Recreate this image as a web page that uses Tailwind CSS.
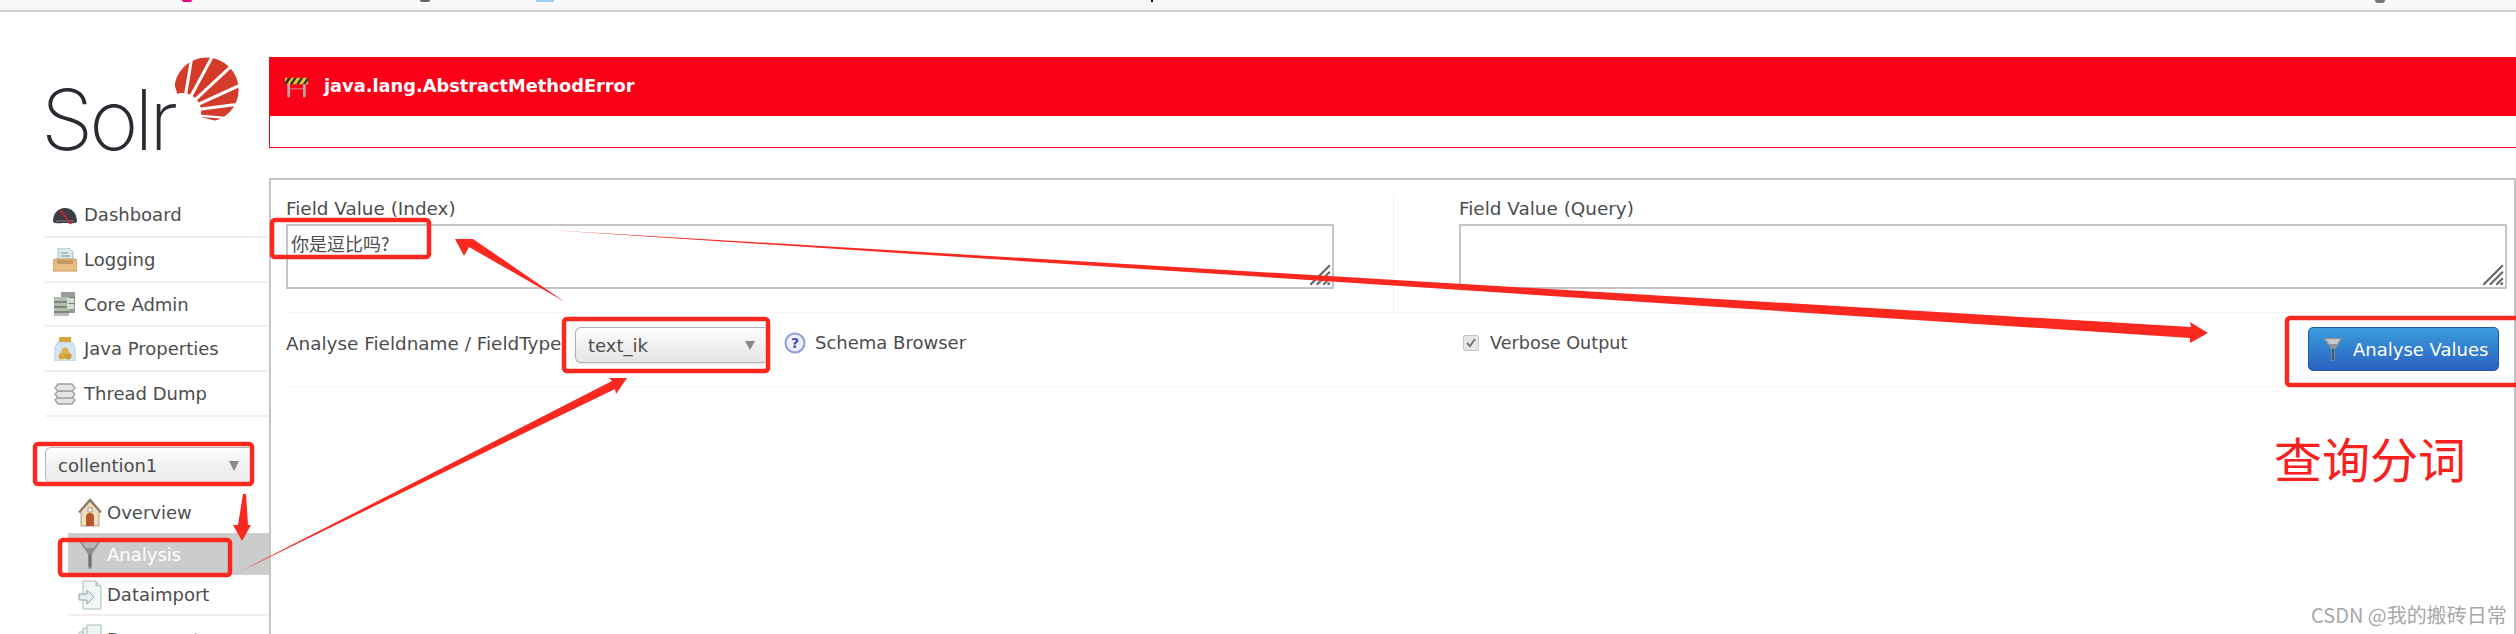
<!DOCTYPE html>
<html lang="en">
<head>
<meta charset="utf-8">
<title>Solr Admin</title>
<script src="https://cdn.jsdelivr.net/npm/@tailwindcss/browser@4"></script>
</head>
<body class="bg-white">
<div class="relative w-[2516px] h-[634px] overflow-hidden bg-white text-[#4d4d4d] text-[18px] font-['DejaVu_Sans',sans-serif]">
  <!-- browser strip -->
  <div class="relative h-[12px] bg-[#f8f8fa] border-b-2 border-[#cfcfd1]">
    <span class="absolute left-[182px] top-0 w-[10px] h-[2px] rounded-b-full bg-[#e6007e]"></span>
    <span class="absolute left-[420px] top-0 w-[10px] h-[2px] rounded-b-full bg-[#666]"></span>
    <span class="absolute left-[536px] top-0 w-[18px] h-[2px] bg-[#9cd0f0]"></span>
    <span class="absolute left-[1151px] top-0 w-[2px] h-[2px] bg-black"></span>
    <span class="absolute left-[2375px] top-0 w-[10px] h-[3px] rounded-b-full bg-[#777]"></span>
  </div>

  <div class="flex">
    <!-- sidebar -->
    <aside class="w-[269px] shrink-0 pl-[45px]">
      <div class="relative h-[181px] pt-[60px]">
        <svg class="absolute left-[128px] top-[45px]" width="67" height="66" viewBox="516 168 200 196">
          <circle cx="616" cy="265" r="96" fill="#d53b2a"/>
          <g stroke="#fff" stroke-width="9">
            <line x1="545" y1="330" x2="572" y2="170"/>
            <line x1="545" y1="330" x2="634" y2="165"/>
            <line x1="545" y1="330" x2="690" y2="195"/>
            <line x1="545" y1="330" x2="720" y2="250"/>
            <line x1="545" y1="330" x2="715" y2="308"/>
          </g>
          <line x1="545" y1="338" x2="680" y2="350" stroke="#fff" stroke-width="7"/>
          <circle cx="545" cy="330" r="55" fill="#fff"/>
          <polygon points="545,330 505,200 480,200 480,420 720,420 700,358 650,360 595,345" fill="#fff"/>
        </svg>
        <div class="relative font-['Inter',sans-serif] font-extralight text-[#2b2a33] text-[84px] leading-[96px] tracking-[-4px] -ml-[4px]">Solr</div>
      </div>

      <nav>
        <a class="flex items-center h-[45px] pl-2 gap-[7px] border-b-2 border-[#f0f0f0]">
          <svg class="w-6 h-6" viewBox="0 0 24 24"><path d="M0 19C0 10 5 5 12 5s12 5 12 14c-3 2-6 1-12 1s-9 1-12-1z" fill="#3d3d45"/><path d="M3 18h18" stroke="#8a8a90" stroke-width="1"/><path d="M7 7l11 14" stroke="#c1272d" stroke-width="2"/></svg>
          <span>Dashboard</span>
        </a>
        <a class="flex items-center h-[45px] pl-2 gap-[7px] border-b-2 border-[#f0f0f0]">
          <svg class="w-6 h-6" viewBox="0 0 24 24"><path d="M5 0h11l4 4v12H5z" fill="#d8eaea" stroke="#a9c0c0"/><path d="M8 5h7M8 8h9" stroke="#9db5b5" stroke-width="1.5"/><path d="M0 12l3-1h18l3 1v11H0z" fill="#e8bd82" stroke="#c99a5c"/><path d="M4 12h16v4H4z" fill="#c59a62"/></svg>
          <span>Logging</span>
        </a>
        <a class="flex items-center h-[44px] pl-2 gap-[7px] border-b-2 border-[#f0f0f0]">
          <svg class="w-6 h-6" viewBox="0 0 24 24"><path d="M8 0h14v21H8z" fill="#9a9a9a"/><path d="M1 5h15v19H1z" fill="#b5bdb2"/><path d="M1 10h15M1 15h15M1 20h15M22 6H16M22 12H16" stroke="#6c706a" stroke-width="1.5"/><path d="M14 6h7v5h-7zM14 12h7v5h-7z" fill="#cde0d0"/></svg>
          <span>Core Admin</span>
        </a>
        <a class="flex items-center h-[45px] pl-2 gap-[7px] border-b-2 border-[#f0f0f0]">
          <svg class="w-6 h-6" viewBox="0 0 24 24"><path d="M5 5h14l3 5v14H2V10z" fill="#d4e6f5" stroke="#b5cde0"/><path d="M6 0h12v5H6z" fill="#d4a73c"/><circle cx="9" cy="19" r="3.5" fill="#dca940"/><circle cx="15" cy="19" r="3.5" fill="#cf9d35"/><circle cx="12" cy="14" r="3.5" fill="#e0b24d"/></svg>
          <span>Java Properties</span>
        </a>
        <a class="flex items-center h-[45px] pl-2 gap-[7px] border-b-2 border-[#f0f0f0]">
          <svg class="w-6 h-6" viewBox="0 0 24 24"><g fill="#e4e4e4" stroke="#9e9e9e" stroke-width="1.3"><path d="M2 18l3-3h14l3 3-3 4H5z"/><path d="M2 12l3-3h14l3 3-3 4H5z"/><path d="M2 6l3-4h14l3 4-3 3H5z"/></g></svg>
          <span>Thread Dump</span>
        </a>
      </nav>

      <div class="mt-[30px] w-[204px] h-[36px] flex items-center justify-between pl-[12px] pr-[10px] border border-[#b5b5b5] border-r-0 border-b-0 rounded-l-[6px] bg-gradient-to-b from-white via-[#f0f0f0] to-[#ebebeb]">
        <span>collention1</span>
        <span class="w-0 h-0 border-x-[5px] border-x-transparent border-t-[10px] border-t-[#888]"></span>
      </div>

      <div class="mt-[8px] ml-[23px]">
        <a class="flex items-center h-[42px] pl-[10px] gap-[5px]">
          <svg class="w-[24px] h-[30px]" viewBox="0 0 24 30"><path d="M3 13L12 2l9 11v16H3z" fill="#f1dcc0" stroke="#b39b7c"/><path d="M0 15L12 1l12 14-2 1L12 5 2 16z" fill="#8d7c6c"/><rect x="10" y="11" width="4" height="4" fill="#fff" stroke="#8a6f52" stroke-width=".7"/><path d="M8 29V20a4 4 0 018 0v9z" fill="#b5572a"/></svg>
          <span>Overview</span>
        </a>
        <a class="flex items-center h-[42px] pl-[10px] gap-[5px] bg-[#cccccc] text-white">
          <svg class="w-[24px] h-[30px]" viewBox="0 0 24 30"><path d="M1 2h22l-9 13v13a2 2 0 01-4 0V15z" fill="#8f8f8f"/><path d="M4 3h16l-4 6H8z" fill="#b8b8b8"/><path d="M12 15v13" stroke="#666" stroke-width="1.5"/></svg>
          <span>Analysis</span>
        </a>
        <a class="flex items-center h-[41px] pl-[10px] gap-[5px] border-b-2 border-[#f0f0f0]">
          <svg class="w-[24px] h-[30px]" viewBox="0 0 24 30"><path d="M5 1h13l5 5v23H5z" fill="#f0f6f5" stroke="#a6bcba"/><path d="M18 1v5h5" fill="#d5e4e2" stroke="#a6bcba"/><path d="M1 14h8v-4l7 7-7 7v-4H1z" fill="#e5efee" stroke="#8aa5a2"/></svg>
          <span>Dataimport</span>
        </a>
        <a class="flex items-center h-[46px] pl-[10px] gap-[5px]">
          <svg class="w-[24px] h-[30px]" viewBox="0 0 24 30"><path d="M1 8h15v20H1z" fill="#eef4f3" stroke="#a6bcba"/><path d="M5 4h15v20H5z" fill="#eef4f3" stroke="#a6bcba"/><path d="M9 1h14v20H9z" fill="#eef4f3" stroke="#a6bcba"/></svg>
          <span>Documents</span>
        </a>
      </div>
    </aside>

    <!-- main -->
    <main class="flex-1 min-w-0 pt-[45px]">
      <div class="h-[91px] border border-[#ff0018] border-r-0">
        <div class="h-[59px] bg-[#fc0018] flex items-center pl-[16px] gap-[15px] text-white font-bold text-[17.8px] -mt-px -ml-px">
          <svg class="w-[24px] h-[24px]" viewBox="0 0 26 26"><path d="M4 8v16M21 8v16" stroke="#b9a4a4" stroke-width="3"/><path d="M4 15h17" stroke="#c79b9b" stroke-width="1"/><rect x="0" y="3" width="25" height="7" fill="#e8c23c"/><path d="M3 3l-3 5v2h2l5-7zM10 3L5 10h3l5-7zM17 3l-5 7h3l5-7zM24 3l-5 7h3l3-4V3z" fill="#33302a"/></svg>
          <span>java.lang.AbstractMethodError</span>
        </div>
      </div>

      <section class="mt-[30px] h-[460px] border-t-2 border-l-2 border-r-2 border-[#c4c4c4] pl-[15px] pr-[8px]">
        <div class="flex h-[133px] pt-[14px] border-b border-[#f6f6f6]">
          <div class="w-[1108px] shrink-0 border-r border-[#f0f0f0]">
            <label class="block h-[16px] leading-[29px] text-[18.4px]">Field Value (Index)</label>
            <div class="relative mt-[14px] w-[1048px] h-[65px] border-2 border-[#c4c4c4] px-[3px] pt-[3px] text-[18px] leading-[28px] font-['Noto_Sans_CJK_SC',sans-serif]">你是逗比吗?
              <svg class="absolute right-0 bottom-0" width="26" height="26" viewBox="0 0 24 24"><path d="M4 22L22 4M10 22L22 10M16 22l6-6M20 22l2-2" stroke="#666" stroke-width="2"/></svg>
            </div>
          </div>
          <div class="flex-1 pl-[65px]">
            <label class="block h-[16px] leading-[29px] text-[18.4px]">Field Value (Query)</label>
            <div class="relative mt-[14px] w-[1048px] h-[65px] border-2 border-[#c4c4c4]">
              <svg class="absolute right-0 bottom-0" width="26" height="26" viewBox="0 0 24 24"><path d="M4 22L22 4M10 22L22 10M16 22l6-6M20 22l2-2" stroke="#666" stroke-width="2"/></svg>
            </div>
          </div>
        </div>

        <div class="flex h-[74px] border-b border-[#f6f6f6]">
          <div class="w-[1108px] shrink-0 flex items-start pt-[14px]">
            <span class="leading-[33px] w-[289px] shrink-0 whitespace-nowrap text-[18.4px]">Analyse Fieldname / FieldType</span>
            <div class="w-[190px] h-[36px] flex items-center justify-between pl-[12px] pr-[10px] border border-[#b0b0b0] border-r-0 rounded-l-[6px] bg-gradient-to-b from-white via-[#f0f0f0] to-[#e6e6e6] shadow-sm">
              <span>text_ik</span>
              <span class="w-0 h-0 border-x-[5px] border-x-transparent border-t-[9px] border-t-[#888]"></span>
            </div>
            <svg class="ml-[19px] mt-[5px] w-[22px] h-[22px]" viewBox="0 0 22 22"><circle cx="11" cy="11" r="9.5" fill="#eef0fb" stroke="#8c9ce0" stroke-width="2"/><text x="11" y="16" text-anchor="middle" font-family="DejaVu Sans" font-weight="700" font-size="14" fill="#3d4fb0">?</text></svg>
            <span class="ml-[9px] leading-[32px]">Schema Browser</span>
          </div>
          <div class="flex-1 pl-[69px] flex items-start justify-between pr-[7px] pt-[14px]">
            <div class="flex items-center h-[32px] gap-[11px]">
              <span class="w-[16px] h-[16px] flex items-center justify-center bg-[#e6e6e6] border border-[#c4c4c4] rounded-[2px] text-[#777]">
                <svg width="12" height="12" viewBox="0 0 12 12"><path d="M2 6l3 3 5-7" fill="none" stroke="#777" stroke-width="2"/></svg>
              </span>
              <span class="text-[17.6px]">Verbose Output</span>
            </div>
            <button class="w-[191px] h-[44px] flex items-center pl-[14px] gap-[10px] rounded-[5px] border border-[#1f59a8] bg-gradient-to-b from-[#3a9cdb] to-[#2c62c2] text-white">
              <svg class="w-[20px] h-[24px]" viewBox="0 0 20 24"><path d="M0 1h20l-8 11v10a2 2 0 01-4 0V12z" fill="#8f9299"/><path d="M3 2h14l-3 5H6z" fill="#c5c8cc"/><path d="M10 12v11" stroke="#375c7f" stroke-width="2.5"/></svg>
              <span>Analyse Values</span>
            </button>
          </div>
        </div>
      </section>
    </main>
  </div>

  <!-- screenshot annotations drawn over the page -->
  <svg class="absolute left-0 top-0 pointer-events-none" width="2516" height="634" viewBox="0 0 2516 634">
    <g fill="#fb2820">
      <polygon points="549,230 2191,327 2190,322 2208,333 2190,343 2190,338"/>
      <polygon points="565,302 473,239 455,239 464,256 469,247"/>
      <polygon points="239,572 612,381 609,378 627,378 616,394 615,389"/>
      <polygon points="243,494 246,494 248,525 251,525 242,541 233,525 238,525"/>
    </g>
    <g fill="none" stroke="#fb2820" stroke-width="4.5">
      <rect x="272" y="220" width="157" height="37" rx="3"/>
      <rect x="564" y="319" width="204" height="52" rx="3"/>
      <rect x="35" y="444" width="217" height="40" rx="3"/>
      <rect x="60" y="540" width="170" height="35" rx="3"/>
      <rect x="2287" y="318" width="240" height="67" rx="3"/>
    </g>
  </svg>
  <div class="absolute left-[2274px] top-[425px] text-[48px] leading-[64px] text-[#fb2020] font-['Noto_Sans_CJK_SC',sans-serif]">查询分词</div>
  <div class="absolute left-[2311px] top-[601px] text-[20px] leading-[28px] text-[#a8a8a8] font-['Noto_Sans_CJK_SC',sans-serif]">CSDN @我的搬砖日常</div>
</div>
</body>
</html>
